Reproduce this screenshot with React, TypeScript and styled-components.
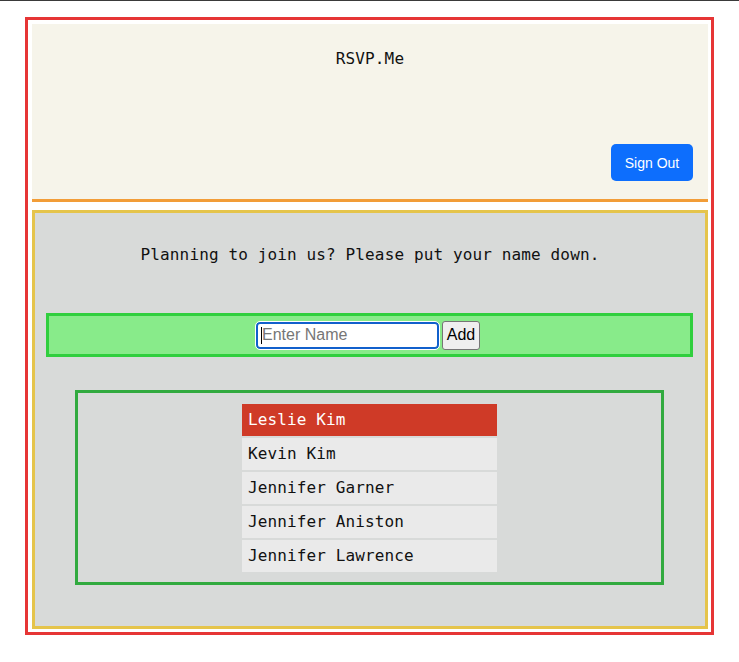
import React from "react";
import styled, { createGlobalStyle } from "styled-components";

const GlobalStyle = createGlobalStyle`
  html, body {
    margin: 0;
    padding: 0;
    background: #ffffff;
  }
  * { box-sizing: border-box; }
`;

const TopRule = styled.div`
  height: 1px;
  background: #3a3a3a;
`;

const Frame = styled.div`
  margin: 16px 25px 0 25px;
  border: 3px solid #e63535;
  padding: 4px 3px 3px 4px;
`;

const Header = styled.header`
  height: 178px;
  background: #f6f4ea;
  border-bottom: 3px solid #f29d38;
  display: flex;
  flex-direction: column;
  align-items: center;
  padding: 25px 15px 18px 0;
`;

const Title = styled.div`
  font-family: "DejaVu Sans Mono", "Liberation Mono", monospace;
  font-size: 16px;
  line-height: 19px;
  letter-spacing: 0.12px;
  color: #111;
  padding-left: 15px;
`;

const SignOutButton = styled.button`
  margin-top: auto;
  align-self: flex-end;
  width: 82px;
  height: 37px;
  border: none;
  border-radius: 5px;
  background: #0d6efd;
  color: #ffffff;
  font-family: "Liberation Sans", Arial, sans-serif;
  font-size: 14px;
  padding: 1px 0 0;
  cursor: pointer;
`;

const Main = styled.main`
  margin-top: 8px;
  border: 3px solid #e5c44b;
  background: #d8dad9;
  padding: 32px 0 41px;
  display: flex;
  flex-direction: column;
`;

const Prompt = styled.p`
  margin: 0;
  text-align: center;
  font-family: "DejaVu Sans Mono", "Liberation Mono", monospace;
  font-size: 16px;
  line-height: 19px;
  letter-spacing: 0.13px;
  color: #111;
`;

const FormBar = styled.form`
  margin: 49px 12px 0 11px;
  height: 44px;
  border: 3px solid #30cf3e;
  background: #88eb8a;
  display: flex;
  justify-content: center;
  align-items: center;
  gap: 3px;
  padding: 0 3px 0 0;
`;

const InputWrap = styled.span`
  position: relative;
  display: inline-flex;
  &::after {
    content: "";
    position: absolute;
    left: 5px;
    top: 5px;
    width: 1px;
    height: 17px;
    background: #000;
  }
`;

const NameInput = styled.input`
  width: 183px;
  height: 27px;
  border: 2px solid #1160cc;
  border-radius: 4px;
  box-shadow: inset 0 0 0 1px #ffffff;
  outline: 1px solid #ffffff;
  outline-offset: 0;
  background: #ffffff;
  padding: 0 0 1px 4px;
  font-family: "Liberation Sans", Arial, sans-serif;
  font-size: 16px;
  color: #111;
  &::placeholder {
    color: #767676;
  }
`;

const AddButton = styled.button`
  width: 38px;
  height: 29px;
  padding: 0;
  border: 1px solid #767676;
  border-radius: 3px;
  background: #efefef;
  color: #000;
  font-family: "Liberation Sans", Arial, sans-serif;
  font-size: 16px;
`;

const ListBox = styled.ul`
  list-style: none;
  margin: 33px 41px 0 40px;
  border: 3px solid #31aa3f;
  padding: 11px 0 10px;
  display: flex;
  flex-direction: column;
  align-items: center;
  gap: 2px;
`;

const Guest = styled.li<{ $active?: boolean }>`
  width: 255px;
  height: 32px;
  padding-left: 6px;
  background: ${(p) => (p.$active ? "#cf3a27" : "#eaeaea")};
  color: ${(p) => (p.$active ? "#ffffff" : "#111111")};
  font-family: "DejaVu Sans Mono", "Liberation Mono", monospace;
  font-size: 16px;
  line-height: 32px;
  letter-spacing: 0.12px;
`;

const guests = [
  "Leslie Kim",
  "Kevin Kim",
  "Jennifer Garner",
  "Jennifer Aniston",
  "Jennifer Lawrence",
];

export default function App() {
  return (
    <>
      <GlobalStyle />
      <TopRule />
      <Frame>
        <Header>
          <Title>RSVP.Me</Title>
          <SignOutButton type="button">Sign Out</SignOutButton>
        </Header>
        <Main>
          <Prompt>Planning to join us? Please put your name down.</Prompt>
          <FormBar onSubmit={(e) => e.preventDefault()}>
            <InputWrap>
              <NameInput type="text" placeholder="Enter Name" />
            </InputWrap>
            <AddButton type="submit">Add</AddButton>
          </FormBar>
          <ListBox>
            {guests.map((g, i) => (
              <Guest key={g} $active={i === 0}>
                {g}
              </Guest>
            ))}
          </ListBox>
        </Main>
      </Frame>
    </>
  );
}
